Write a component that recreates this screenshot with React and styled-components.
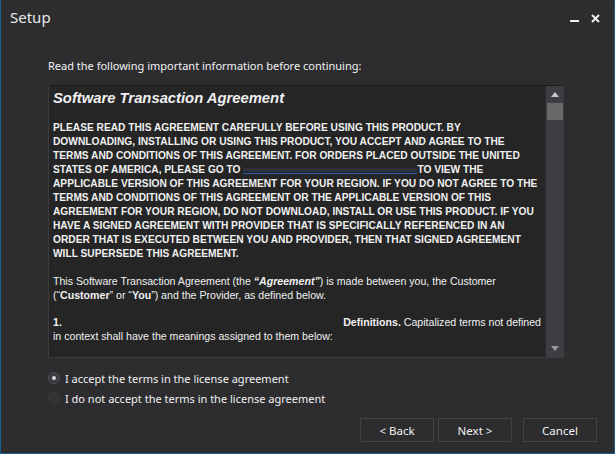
import React from 'react';
import styled, { createGlobalStyle } from 'styled-components';

const GlobalStyle = createGlobalStyle`
  html, body { margin: 0; padding: 0; background: #2d2d30; }
  * { box-sizing: border-box; }
`;

// Outer dialog window with a thin accent border.
const Window = styled.div`
  width: 615px;
  height: 454px;
  background: #2d2d30;
  border: 1px solid #1b5f94;
  border-top-color: #2d2d30;
  display: flex;
  flex-direction: column;
  font-family: 'Noto Sans', 'Open Sans', sans-serif;
  color: #f1f1f1;
  overflow: hidden;
`;

const TitleBar = styled.div`
  height: 36px;
  display: flex;
  align-items: center;
  padding: 0 14px 0 9px;
`;

const Title = styled.div`
  flex: 1;
  font-size: 15px;
  color: #e8e8e8;
  margin-top: -4px;
`;

const WinButtons = styled.div`
  display: flex;
  align-items: center;
  gap: 12px;
  margin-top: -2px;
`;

const Body = styled.div`
  flex: 1;
  display: flex;
  flex-direction: column;
  padding: 19px 50px 0 47px;
`;

const Intro = styled.div`
  font-size: 11px;
  color: #f1f1f1;
  height: 29px;
  padding-top: 2px;
`;

const AgreementBox = styled.div`
  height: 273px;
  border: 1px solid #3c3c3f;
  border-top-color: #1e1e1e;
  background: #252526;
  display: flex;
`;

const TextArea = styled.div`
  flex: 1;
  padding: 2px 0 0 4px;
  overflow: hidden;
  font-family: 'Liberation Sans', Arial, sans-serif;
  color: #f0f0f0;
`;

const Heading = styled.div`
  font-size: 14.8px;
  font-weight: bold;
  font-style: italic;
  height: 33px;
  line-height: 20px;
`;

const Para = styled.div`
  font-size: ${(p) => (p.$caps ? '10.2px' : '10.6px')};
  font-weight: ${(p) => (p.$caps ? 'bold' : 'normal')};
  line-height: 14px;
  margin-bottom: 13px;
  white-space: nowrap;
`;

const Line = styled.div`
  display: flex;
  justify-content: ${(p) => (p.$spread ? 'space-between' : 'flex-start')};
  padding-right: ${(p) => (p.$spread ? '4px' : '0')};
`;

const Redacted = styled.span`
  display: inline-block;
  width: 174px;
  height: 10px;
  margin-top: 2px;
  background: linear-gradient(
    to bottom,
    transparent 0,
    transparent 3px,
    #3b2a2a 3px,
    #2b3550 6px,
    transparent 7px,
    transparent 8px,
    #2e5aa8 8px,
    #2e5aa8 9px,
    transparent 9px
  );
`;

const Scrollbar = styled.div`
  width: 18px;
  background: #3e3e42;
  display: flex;
  flex-direction: column;
  align-items: center;
  border-left: 1px solid #2e2e31;
`;

const ScrollArrow = styled.div`
  height: 17px;
  width: 100%;
  display: flex;
  align-items: center;
  justify-content: center;
`;

const Thumb = styled.div`
  width: 16px;
  height: 17px;
  background: #686868;
`;

const Track = styled.div`
  flex: 1;
`;

const Options = styled.div`
  margin-top: 12px;
  display: flex;
  flex-direction: column;
  gap: 4px;
`;

const Option = styled.label`
  display: flex;
  align-items: center;
  gap: 5px;
  height: 16px;
  font-size: 11px;
  color: #f1f1f1;
`;

const Radio = styled.span`
  width: 12px;
  height: 12px;
  border-radius: 50%;
  background: ${(p) => (p.$checked ? '#3c3c40' : '#333336')};
  border: 1px solid ${(p) => (p.$checked ? '#505054' : '#3a3a3d')};
  display: flex;
  align-items: center;
  justify-content: center;

  &::after {
    content: '';
    width: 4px;
    height: 4px;
    border-radius: 50%;
    background: ${(p) => (p.$checked ? '#d8d8d8' : 'transparent')};
  }
`;

const ButtonRow = styled.div`
  display: flex;
  justify-content: flex-end;
  margin: 12px -33px 0 0;
  gap: 4px;
`;

const Button = styled.button`
  width: 74px;
  height: 24px;
  margin-left: ${(p) => (p.$gapBefore ? '7px' : '0')};
  background: #2d2d30;
  border: 1px solid #434346;
  color: #f1f1f1;
  font-family: 'Noto Sans', 'Open Sans', sans-serif;
  font-size: 11.5px;
  padding: 0;
`;

const Bold = styled.b`
  font-weight: bold;
`;

const BoldItalic = styled.b`
  font-weight: bold;
  font-style: italic;
`;

const capsLines = [
  'PLEASE READ THIS AGREEMENT CAREFULLY BEFORE USING THIS PRODUCT. BY',
  'DOWNLOADING, INSTALLING OR USING THIS PRODUCT, YOU ACCEPT AND AGREE TO THE',
  'TERMS AND CONDITIONS OF THIS AGREEMENT. FOR ORDERS PLACED OUTSIDE THE UNITED',
  null,
  'APPLICABLE VERSION OF THIS AGREEMENT FOR YOUR REGION. IF YOU DO NOT AGREE TO THE',
  'TERMS AND CONDITIONS OF THIS AGREEMENT OR THE APPLICABLE VERSION OF THIS',
  'AGREEMENT FOR YOUR REGION, DO NOT DOWNLOAD, INSTALL OR USE THIS PRODUCT. IF YOU',
  'HAVE A SIGNED AGREEMENT WITH PROVIDER THAT IS SPECIFICALLY REFERENCED IN AN',
  'ORDER THAT IS EXECUTED BETWEEN YOU AND PROVIDER, THEN THAT SIGNED AGREEMENT',
  'WILL SUPERSEDE THIS AGREEMENT.',
];

function App() {
  return (
    <>
      <GlobalStyle />
      <Window>
        <TitleBar>
          <Title>Setup</Title>
          <WinButtons>
            <svg width="9" height="9" viewBox="0 0 9 9">
              <rect x="0" y="6" width="9" height="2" fill="#f0f0f0" />
            </svg>
            <svg width="9" height="9" viewBox="0 0 9 9">
              <path d="M1 1 L8 8 M8 1 L1 8" stroke="#f0f0f0" strokeWidth="2" />
            </svg>
          </WinButtons>
        </TitleBar>

        <Body>
          <Intro>Read the following important information before continuing:</Intro>

          <AgreementBox>
            <TextArea>
              <Heading>Software Transaction Agreement</Heading>
              <Para $caps>
                {capsLines.map((l, i) =>
                  l === null ? (
                    <Line key={i}>
                      STATES OF AMERICA, PLEASE GO TO&nbsp;
                      <Redacted />
                      TO VIEW THE
                    </Line>
                  ) : (
                    <Line key={i}>{l}</Line>
                  )
                )}
              </Para>
              <Para>
                <Line>
                  This Software Transaction Agreement (the&nbsp;<BoldItalic>“Agreement”</BoldItalic>) is made between you, the Customer
                </Line>
                <Line>
                  (“<Bold>Customer</Bold>” or “<Bold>You</Bold>”) and the Provider, as defined below.
                </Line>
              </Para>
              <Para>
                <Line $spread>
                  <Bold>1.</Bold>
                  <span>
                    <Bold>Definitions.</Bold> Capitalized terms not defined
                  </span>
                </Line>
                <Line>in context shall have the meanings assigned to them below:</Line>
              </Para>
            </TextArea>
            <Scrollbar>
              <ScrollArrow>
                <svg width="8" height="5" viewBox="0 0 8 5">
                  <path d="M0 5 L4 0 L8 5 Z" fill="#c8c8c8" />
                </svg>
              </ScrollArrow>
              <Thumb />
              <Track />
              <ScrollArrow>
                <svg width="8" height="5" viewBox="0 0 8 5">
                  <path d="M0 0 L8 0 L4 5 Z" fill="#999999" />
                </svg>
              </ScrollArrow>
            </Scrollbar>
          </AgreementBox>

          <Options>
            <Option>
              <Radio $checked />
              I accept the terms in the license agreement
            </Option>
            <Option>
              <Radio />
              I do not accept the terms in the license agreement
            </Option>
          </Options>

          <ButtonRow>
            <Button>&lt; Back</Button>
            <Button>Next &gt;</Button>
            <Button $gapBefore>Cancel</Button>
          </ButtonRow>
        </Body>
      </Window>
    </>
  );
}

export default App;
